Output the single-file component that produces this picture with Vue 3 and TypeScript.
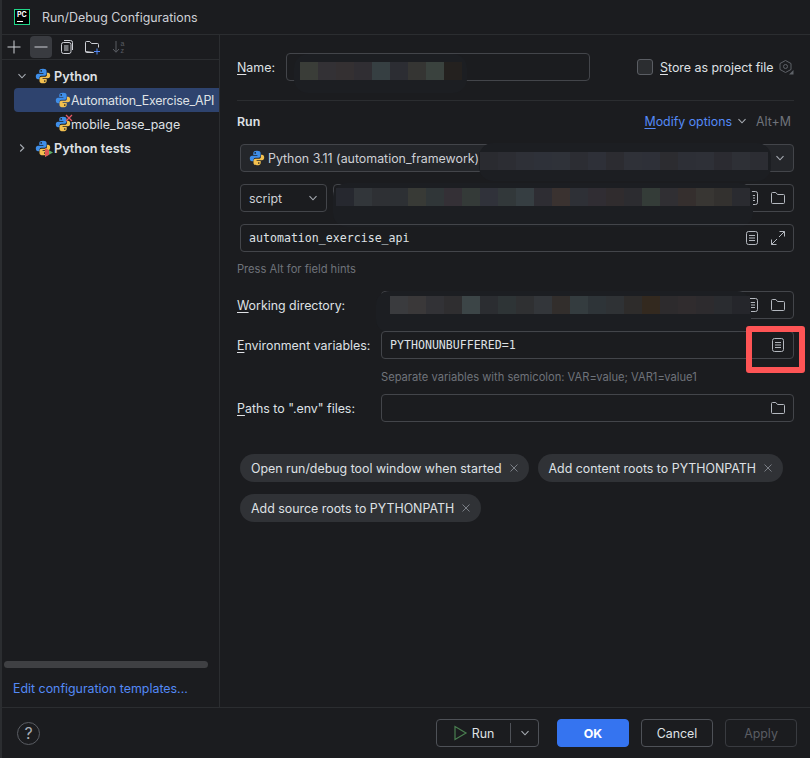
<template>
  <div class="window">
    <svg class="defs" width="0" height="0">
      <symbol id="py" viewBox="0 0 16 16">
        <path fill="#3f8ee8" d="M8 .8C5.700.8 4.300 1.600 4.300 3.100v1.900h4.100v.8H3C1.600 5.800.8 6.800.8 8.400S1.600 11.200 3 11.200h1.500V9.600c0-1.100.9-1.900 2-1.900h3.100c1.100 0 2-.9 2-2V3.100C11.600 1.600 10.300.8 8 .8Z" />
        <path fill="#f3c04f" d="M8 15.200c2.300 0 3.700-.8 3.700-2.300v-1.900H7.600v-.8H13c1.400 0 2.200-1 2.200-2.600S14.400 4.800 13 4.800h-1v1.600c0 1.400-1 2.400-2.400 2.400H6.500c-1.100 0-2 .9-2 2v2.100c0 1.500 1.200 2.300 3.500 2.300Z" />
        <circle cx="6.200" cy="2.900" r=".8" fill="#1b1c1f" />
        <circle cx="9.800" cy="13.100" r=".8" fill="#1b1c1f" />
      </symbol>
      <symbol id="doc" viewBox="0 0 16 16">
        <rect x="2.500" y="1.500" width="11" height="13" rx="2" fill="none" stroke="#b4b8bf" />
        <path d="M5 5.500h6M5 8h6M5 10.500h6" stroke="#b4b8bf" fill="none" />
      </symbol>
      <symbol id="folder" viewBox="0 0 16 16">
        <path d="M1.500 3.500a1 1 0 0 1 1-1h3.300l1.700 2h6a1 1 0 0 1 1 1v7a1 1 0 0 1-1 1h-11a1 1 0 0 1-1-1Z" fill="none" stroke="#b4b8bf" />
      </symbol>
      <symbol id="close" viewBox="0 0 10 10">
        <path d="M1.500 1.500l7 7M8.500 1.500l-7 7" stroke="#7a7e85" fill="none" />
      </symbol>
      <symbol id="chev" viewBox="0 0 10 10">
        <path d="M1.500 3.200 5 6.800l3.500-3.600" stroke="#a8adb4" stroke-width="1.100" fill="none" />
      </symbol>
    </svg>

    <span class="edge-mark" style="top:600px;height:9px"></span>
    <span class="edge-mark" style="top:645px;height:8px"></span>

    <header class="titlebar">
      <div class="pc-logo"><span>PC</span><i></i></div>
      <span class="title">Run/Debug Configurations</span>
    </header>

    <div class="main">
      <aside class="sidebar">
        <div class="toolbar">
          <svg class="tool plus" width="16" height="16" viewBox="0 0 16 16"><path d="M8 1.500v13M1.500 8h13" stroke="#ced0d6" fill="none" /></svg>
          <span class="tool-on"><svg width="16" height="16" viewBox="0 0 16 16"><path d="M1.500 8h13" stroke="#ced0d6" fill="none" /></svg></span>
          <svg class="tool" width="16" height="16" viewBox="0 0 16 16"><rect x="2.500" y="3.500" width="9.500" height="11" rx="2" fill="none" stroke="#ced0d6" /><path d="M5 1.500h6.500a2 2 0 0 1 2 2V11" fill="none" stroke="#ced0d6" /><path d="M5 7h4.500M5 9h4.500M5 11h4.500" stroke="#ced0d6" /></svg>
          <svg class="tool" width="18" height="16" viewBox="0 0 18 16"><path d="M1.500 3.500a1 1 0 0 1 1-1h3.300l1.700 2h6a1 1 0 0 1 1 1v3M9.500 13.500h-7a1 1 0 0 1-1-1Z" fill="none" stroke="#ced0d6" /><path d="M1.500 3.500v9" stroke="#ced0d6" /><path d="M13 9.500v6M10 12.500h6" stroke="#548af7" fill="none" /></svg>
          <svg class="tool" width="16" height="16" viewBox="0 0 16 16"><path d="M5 2v11M2 10l3 3.300L8 10" stroke="#5a5d63" fill="none" /><text x="9.500" y="6.500" class="az">a</text><text x="9.500" y="14" class="az">z</text></svg>
        </div>
        <div class="tree">
          <div class="tree-row group">
            <svg class="arrow" width="10" height="10"><use href="#chev" /></svg>
            <svg width="16" height="16"><use href="#py" /></svg>
            <span class="strong">Python</span>
          </div>
          <div class="tree-row child selected">
            <svg width="16" height="16"><use href="#py" /></svg>
            <span>Automation_Exercise_API</span>
          </div>
          <div class="tree-row child">
            <span class="icon-wrap">
              <svg width="16" height="16"><use href="#py" /></svg>
              <svg class="err" width="8" height="8" viewBox="0 0 8 8"><path d="M1 1l6 6M7 1 1 7" stroke="#e55765" stroke-width="1.300" /></svg>
            </span>
            <span>mobile_base_page</span>
          </div>
          <div class="tree-row group">
            <svg class="arrow" width="10" height="10" viewBox="0 0 10 10"><path d="M3.200 1.500 6.800 5 3.200 8.500" stroke="#a8adb4" stroke-width="1.100" fill="none" /></svg>
            <span class="icon-wrap">
              <svg width="16" height="16"><use href="#py" /></svg>
              <svg class="test" width="8" height="9" viewBox="0 0 8 9"><path d="M0 0v9l8-4.500Z" fill="#5fad65" /><path d="M0 0v9l4-2.200V2.200Z" fill="#e05555" /></svg>
            </span>
            <span class="strong">Python tests</span>
          </div>
        </div>
        <div class="scrollbar"></div>
        <a class="templates">Edit configuration templates...</a>
      </aside>

      <section class="form">
        <div class="name-row">
          <label class="label name-label"><u>N</u>ame:</label>
          <div class="field name-field">
            <div class="blob" style="left:7px;top:0;width:173px;height:39px"></div>
            <div class="pixels" style="left:13px;top:8px">
              <i v-for="(c, i) in namePixels" :key="i" :style="{ background: c }"></i>
            </div>
          </div>
          <span class="checkbox"></span>
          <span class="store"><u>S</u>tore as project file</span>
          <svg class="gear" width="16" height="16" viewBox="0 0 16 16"><path d="M7.500 1.500 13 4.500v6l-5.500 3L2 10.500v-6Z" fill="none" stroke="#5f6268" /><circle cx="7.500" cy="7.500" r="2" fill="none" stroke="#5f6268" /><path d="M15.500 11v4.500H11Z" fill="#5f6268" /></svg>
        </div>
        <div class="separator"></div>

        <div class="run-head">
          <span class="strong">Run</span>
          <span class="modify"><u>M</u>odify options</span>
          <svg class="mod-chev" width="10" height="10"><use href="#chev" /></svg>
          <span class="shortcut">Alt+M</span>
        </div>

        <div class="field combo interp">
          <svg class="interp-icon" width="16" height="16"><use href="#py" /></svg>
          <span>Python 3.11 (automation_framework)</span>
          <svg class="combo-chev" width="10" height="10"><use href="#chev" /></svg>
          <div class="blob" style="left:238px;top:-2px;width:292px;height:38px"></div>
          <div class="pixels" style="left:239px;top:7px">
            <i v-for="(c, i) in interpPixels" :key="i" :style="{ background: c }"></i>
          </div>
        </div>

        <div class="script-row">
          <div class="field combo script">
            <span>script</span>
            <svg class="combo-chev" width="10" height="10"><use href="#chev" /></svg>
          </div>
          <div class="field grow">
            <span class="end-icons">
              <svg width="16" height="16"><use href="#doc" /></svg>
              <svg width="16" height="16"><use href="#folder" /></svg>
            </span>
            <div class="blob" style="left:-1px;top:-2px;width:420px;height:44px"></div>
            <div class="pixels" style="left:2px;top:3px">
              <i v-for="(c, i) in scriptPixels" :key="i" :style="{ background: c }"></i>
            </div>
          </div>
        </div>

        <div class="field module">
          <span class="mono">automation_exercise_api</span>
          <span class="end-icons">
            <svg width="16" height="16"><use href="#doc" /></svg>
            <svg width="16" height="16" viewBox="0 0 16 16"><path d="M9.500 1.500h5v5M14.500 1.500 9 7M6.500 14.500h-5v-5M1.500 14.500 7 9" fill="none" stroke="#b4b8bf" /></svg>
          </span>
        </div>
        <div class="hint alt-hint">Press Alt for field hints</div>

        <div class="labeled wd-row">
          <label class="label"><u>W</u>orking directory:</label>
          <div class="field grow">
            <span class="end-icons">
              <svg width="16" height="16"><use href="#doc" /></svg>
              <svg width="16" height="16"><use href="#folder" /></svg>
            </span>
            <div class="blob" style="left:-6px;top:-1px;width:375px;height:42px"></div>
            <div class="pixels" style="left:8px;top:4px">
              <i v-for="(c, i) in dirPixels" :key="i" :style="{ background: c }"></i>
            </div>
          </div>
        </div>

        <div class="labeled env-row">
          <label class="label"><u>E</u>nvironment variables:</label>
          <div class="field grow">
            <span class="mono">PYTHONUNBUFFERED=1</span>
            <span class="end-icons">
              <svg width="16" height="16"><use href="#doc" /></svg>
            </span>
            <div class="highlight"></div>
          </div>
        </div>
        <div class="hint env-hint">Separate variables with semicolon: VAR=value; VAR1=value1</div>

        <div class="labeled paths-row">
          <label class="label"><u>P</u>aths to ".env" files:</label>
          <div class="field grow">
            <span class="end-icons">
              <svg width="16" height="16"><use href="#folder" /></svg>
            </span>
          </div>
        </div>

        <div class="chips">
          <span v-for="chip in chips" :key="chip" class="chip">
            {{ chip }}
            <svg width="10" height="10"><use href="#close" /></svg>
          </span>
        </div>
      </section>
    </div>

    <footer class="footer">
      <span class="help">?</span>
      <div class="buttons">
        <div class="btn run-btn">
          <span class="run-main">
            <svg width="16" height="16" viewBox="0 0 16 16"><path d="M3 1.500v13L14 8Z" fill="none" stroke="#4a7f50" stroke-width="1.200" /></svg>
            Run
          </span>
          <span class="run-drop"><svg width="10" height="10"><use href="#chev" /></svg></span>
        </div>
        <button class="btn ok">OK</button>
        <button class="btn">Cancel</button>
        <button class="btn apply">Apply</button>
      </div>
    </footer>
  </div>
</template>

<script setup lang="ts">
const namePixels: string[] = ['#3a3d38', '#333135', '#343032', '#302e33', '#363f42', '#2c2d33', '#353533', '#3a423e', '#24211f']

const interpPixels: string[] = ['#2a2b30', '#2c2d33', '#2e3037', '#2e3139', '#2f3239', '#2c2d33', '#2e3038', '#2c2c31', '#2f3138', '#2e3038', '#2c2c30', '#2d2f36', '#2e3037', '#2b2b31', '#2e3036', '#2c2d33']

const scriptPixels: string[] = ['#26282f', '#32363a', '#2e3034', '#2d3034', '#383a36', '#303638', '#343036', '#343a38', '#30323a', '#32383a', '#363e42', '#2e2d33', '#3a3230', '#2e3036', '#302d33', '#302c2e', '#2c2c30', '#343c38', '#302f33', '#352f2e', '#383633', '#33312f', '#2a2b30']

const dirPixels: string[] = ['#3a3b3e', '#3a3839', '#323236', '#2f2e30', '#3c4547', '#2b2d31', '#2e3436', '#2f3032', '#33363a', '#322e2c', '#343c3f', '#2e3438', '#2f3235', '#2e2c2b', '#33291f', '#2d2b2d', '#302c2e', '#2d2b2e', '#2a2c30', '#25262b']

const chips: string[] = [
  'Open run/debug tool window when started',
  'Add content roots to PYTHONPATH',
  'Add source roots to PYTHONPATH',
]
</script>

<style>
body {
  background: #1b1c1f;
}
</style>

<style scoped>
.window {
  position: relative;
  width: 810px;
  height: 758px;
  display: flex;
  flex-direction: column;
  background: #1b1c1f;
  color: #ced0d6;
  font-family: Inter, "Noto Sans", sans-serif;
  font-size: 12.4px;
  overflow: hidden;
  border-left: 2px solid #2b2d30;
  box-sizing: border-box;
}

.defs {
  position: absolute;
}

.edge-mark {
  position: absolute;
  left: -2px;
  width: 2px;
  background: #a8763c;
}

svg {
  flex: none;
}

u {
  text-underline-offset: 2px;
}

.titlebar {
  height: 34px;
  flex: none;
  display: flex;
  align-items: center;
  padding-left: 12px;
  border-bottom: 1px solid #2b2d30;
}

.pc-logo {
  width: 12px;
  height: 14px;
  background: #000;
  border: 1px solid #21d789;
  display: flex;
  flex-direction: column;
  margin-right: 12px;
  color: #fff;
  font-size: 7px;
  font-weight: 700;
  line-height: 9px;
  padding-left: 2px;
  box-sizing: content-box;
}

.pc-logo i {
  display: block;
  width: 6px;
  height: 1px;
  margin-top: 2px;
  background: #fff;
}

.main {
  flex: 1;
  display: flex;
  min-height: 0;
}

.sidebar {
  width: 217px;
  flex: none;
  display: flex;
  flex-direction: column;
  border-right: 1px solid #2b2d30;
}

.toolbar {
  height: 24px;
  flex: none;
  display: flex;
  align-items: center;
  gap: 9px;
  padding-left: 4px;
  border-bottom: 1px solid #2b2d30;
}

.tool-on {
  width: 22px;
  height: 22px;
  margin-left: -1px;
  margin-right: -2px;
  border-radius: 4px;
  background: #393b40;
  display: flex;
  align-items: center;
  justify-content: center;
}

.az {
  font-size: 7px;
  fill: #5a5d63;
  font-family: "Liberation Sans", sans-serif;
}

.tree {
  flex: 1;
  padding-top: 4px;
  padding-left: 12px;
}

.tree-row {
  height: 24px;
  display: flex;
  align-items: center;
  white-space: nowrap;
  color: #dfe1e5;
}

.tree-row.group {
  padding-left: 3px;
  gap: 3px;
  font-size: 12.7px;
}

.arrow {
  margin-right: 5px;
}

.tree-row.child {
  padding-left: 41px;
  gap: 0;
}

.selected {
  background: #2e436e;
  border-radius: 4px 0 0 4px;
  letter-spacing: -0.2px;
}

.strong {
  font-weight: 600;
  color: #dfe1e5;
}

.icon-wrap {
  position: relative;
  display: flex;
  width: 16px;
  height: 16px;
}

.err {
  position: absolute;
  right: -2px;
  top: -2px;
}

.test {
  position: absolute;
  right: -2px;
  bottom: -1px;
}

.scrollbar {
  height: 7px;
  margin: 0 11px 0 2px;
  border-radius: 4px;
  background: #3f4043;
}

.templates {
  color: #548af7;
  padding: 13px 0 10px 11px;
  line-height: 16px;
}

.form {
  flex: 1;
  min-width: 0;
  padding: 18px 16px 0 20px;
}

.label {
  color: #dfe1e5;
  white-space: nowrap;
}

.field {
  position: relative;
  height: 28px;
  box-sizing: border-box;
  border: 1px solid #43454a;
  border-radius: 4px;
  display: flex;
  align-items: center;
  padding-left: 8px;
  white-space: nowrap;
}

.grow {
  flex: 1;
  min-width: 0;
}

.blob {
  position: absolute;
  background: #1c1e22;
  border-radius: 14px;
}

.pixels {
  position: absolute;
  display: flex;
}

.pixels i {
  display: block;
  width: 18px;
  height: 18px;
}

.name-row {
  display: flex;
  align-items: center;
  margin-left: -3px;
  white-space: nowrap;
}

.name-label {
  width: 49px;
  flex: none;
}

.name-field {
  width: 304px;
  flex: none;
}

.checkbox {
  width: 16px;
  height: 16px;
  flex: none;
  box-sizing: border-box;
  margin-left: 47px;
  border: 1px solid #5a5d63;
  border-radius: 3px;
  background: #2b2d30;
}

.store {
  margin-left: 7px;
  color: #dfe1e5;
}

.gear {
  margin-left: 4px;
}

.separator {
  height: 1px;
  margin: 19px 0 0 -3px;
  background: #2b2d30;
}

.run-head {
  display: flex;
  align-items: center;
  height: 20px;
  margin: 10px 0 0 -3px;
}

.modify {
  margin-left: auto;
  color: #548af7;
}

.mod-chev {
  margin-left: 5px;
}

.shortcut {
  margin-left: 9px;
  margin-right: 3px;
  color: #6f737a;
}

.combo {
  background: #24262a;
}

.interp {
  margin-top: 13px;
}

.interp-icon {
  margin-right: 3px;
}

.combo-chev {
  margin-left: auto;
  margin-right: 8px;
}

.script-row {
  display: flex;
  gap: 6px;
  margin-top: 12px;
}

.script {
  width: 87px;
  flex: none;
  background: transparent;
}

.end-icons {
  margin-left: auto;
  display: flex;
  gap: 10px;
  padding-right: 7px;
}

.module {
  margin-top: 12px;
}

.mono {
  font-family: "DejaVu Sans Mono", monospace;
  font-size: 11.6px;
  color: #dfe1e5;
}

.hint {
  color: #6f737a;
  font-size: 11.15px;
  line-height: 16px;
}

.alt-hint {
  margin: 9px 0 0 -3px;
}

.labeled {
  display: flex;
  align-items: center;
  margin-left: -3px;
}

.labeled .label {
  width: 144px;
  flex: none;
}

.wd-row {
  margin-top: 14px;
}

.env-row {
  margin-top: 12px;
}

.highlight {
  position: absolute;
  right: -12px;
  top: -6px;
  width: 47px;
  height: 35px;
  border: 6px solid #fe5455;
  border-radius: 3px;
}

.env-hint {
  margin: 10px 0 0 141px;
}

.paths-row {
  margin-top: 9px;
}

.chips {
  display: flex;
  flex-wrap: wrap;
  gap: 12px 9px;
  margin-top: 32px;
}

.chip {
  height: 28px;
  box-sizing: border-box;
  display: flex;
  align-items: center;
  gap: 7px;
  padding: 0 10px 0 11px;
  border-radius: 14px;
  background: #303236;
  color: #dfe1e5;
  white-space: nowrap;
}

.footer {
  height: 51px;
  flex: none;
  box-sizing: border-box;
  border-top: 1px solid #2b2d30;
  display: flex;
  align-items: center;
  padding: 0 13px 0 15px;
}

.help {
  width: 23px;
  height: 23px;
  box-sizing: border-box;
  border: 1px solid #5a5d63;
  border-radius: 50%;
  display: flex;
  align-items: center;
  justify-content: center;
  font-size: 16px;
  color: #a8adb4;
}

.buttons {
  margin-left: auto;
  display: flex;
  gap: 12px;
}

.btn {
  width: 72px;
  height: 28px;
  box-sizing: border-box;
  border: 1px solid #4e5157;
  border-radius: 4px;
  background: transparent;
  color: #dfe1e5;
  font: inherit;
  padding: 0;
}

.run-btn {
  width: 103px;
  display: flex;
  align-items: center;
  margin-right: 6px;
}

.run-main {
  flex: 1;
  display: flex;
  align-items: center;
  justify-content: center;
  gap: 4px;
  padding-right: 1px;
}

.run-drop {
  width: 27px;
  height: 20px;
  display: flex;
  align-items: center;
  justify-content: center;
  border-left: 1px solid #4e5157;
}

.ok {
  background: #3574f0;
  border-color: #3574f0;
  color: #fff;
  font-weight: 700;
}

.apply {
  border-color: #393b40;
  color: #5a5d63;
}
</style>
